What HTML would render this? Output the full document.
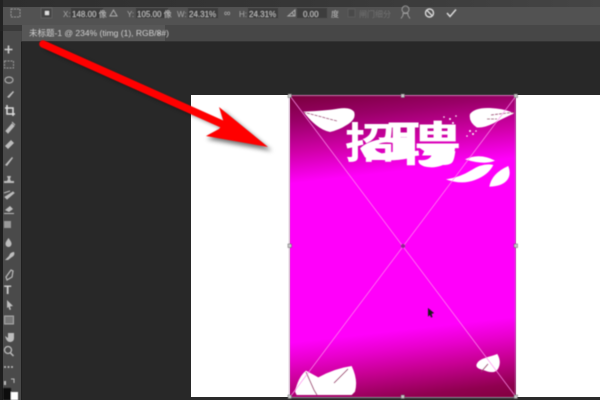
<!DOCTYPE html>
<html><head><meta charset="utf-8">
<style>
html,body{margin:0;padding:0;width:600px;height:400px;overflow:hidden;background:#282828}
svg{position:absolute;left:0;top:0}
text{font-family:"Liberation Sans","Noto Sans CJK SC",sans-serif}
</style></head>
<body>
<svg width="600" height="400" viewBox="0 0 600 400" xmlns="http://www.w3.org/2000/svg">
<defs>
<linearGradient id="g" gradientUnits="userSpaceOnUse" x1="383.600" y1="77.200" x2="422.400" y2="414.800">
<stop offset="0" stop-color="#780038"/>
<stop offset=".03" stop-color="#7c0040"/>
<stop offset=".1" stop-color="#9a0068"/>
<stop offset=".19" stop-color="#d000a8"/>
<stop offset=".28" stop-color="#ff00fa"/>
<stop offset=".745" stop-color="#ff00fa"/>
<stop offset=".8" stop-color="#e800cc"/>
<stop offset=".86" stop-color="#c80094"/>
<stop offset=".94" stop-color="#900050"/>
<stop offset="1" stop-color="#7a0035"/>
</linearGradient>
<linearGradient id="top" x1="0" y1="0" x2="1" y2="0">
<stop offset="0" stop-color="#2e2e2e"/><stop offset=".5" stop-color="#363636"/><stop offset="1" stop-color="#454545"/>
</linearGradient>
<filter id="b2" x="-5%" y="-5%" width="110%" height="110%"><feGaussianBlur stdDeviation=".55"/></filter>
<filter id="sh" x="-20%" y="-20%" width="140%" height="140%"><feGaussianBlur stdDeviation="2.500"/></filter>
</defs>

<!-- workspace -->
<rect width="600" height="400" fill="#282828"/>

<!-- options bar -->
<rect x="0" y="0" width="600" height="7" fill="url(#top)"/>
<rect x="0" y="7" width="600" height="18" fill="#525252"/>
<rect x="0" y="25" width="600" height="16" fill="#474747"/>
<rect x="0" y="41" width="600" height="1" fill="#333"/>
<rect x="0" y="25" width="22" height="6" fill="#3a3a3a"/>
<rect x="0" y="31" width="3" height="369" fill="#1e1e1e"/>
<rect x="0" y="0" width="3" height="31" fill="#222"/>
<rect x="22" y="25" width="143" height="16" fill="#575757"/>

<g filter="url(#b2)">
<rect x="11" y="9" width="9" height="8" fill="none" stroke="#9a9a9a" stroke-width="1" stroke-dasharray="2 1"/>
<rect x="41" y="8" width="11" height="10" fill="#444" stroke="#5e5e5e"/>
<rect x="45" y="11" width="4" height="4" fill="#ddd"/>
<text x="63" y="17" font-size="8" fill="#a8a8a8">X:</text>
<rect x="71" y="8" width="32" height="10" fill="#3d3d3d"/>
<text x="72" y="17" font-size="8" fill="#c0c0c0">148.00 像</text>
<path d="M110 16l3.500-6 3.500 6z" fill="none" stroke="#aaa"/>
<text x="127" y="17" font-size="8" fill="#a8a8a8">Y:</text>
<rect x="136" y="8" width="32" height="10" fill="#3d3d3d"/>
<text x="137" y="17" font-size="8" fill="#c0c0c0">105.00 像</text>
<text x="177" y="17" font-size="8" fill="#a8a8a8">W:</text>
<rect x="188" y="8" width="30" height="10" fill="#3d3d3d"/>
<text x="189" y="17" font-size="8" fill="#c0c0c0">24.31%</text>
<text x="224" y="16" font-size="9" fill="#bbb">∞</text>
<text x="239" y="17" font-size="8" fill="#a8a8a8">H:</text>
<rect x="248" y="8" width="30" height="10" fill="#3d3d3d"/>
<text x="249" y="17" font-size="8" fill="#c0c0c0">24.31%</text>
<path d="M288 16l7-6v6zM292 12l2 4" fill="none" stroke="#aaa"/>
<rect x="297" y="8" width="30" height="10" fill="#3d3d3d"/>
<text x="303" y="17" font-size="8" fill="#c0c0c0">0.00</text>
<text x="331" y="17" font-size="8" fill="#c0c0c0">度</text>
<rect x="348" y="9" width="7" height="8" fill="#4a4a4a" stroke="#5c5c5c"/>
<text x="359" y="17" font-size="8" fill="#717171">闸门细分</text>
<circle cx="405.500" cy="9.500" r="3.500" fill="none" stroke="#999"/>
<path d="M401 18.500l2-3v-2h5v2l2 3" fill="none" stroke="#999"/>
<circle cx="429.500" cy="13" r="4" fill="none" stroke="#d8d8d8" stroke-width="1.400"/>
<path d="M426.800 10.300l5.400 5.400" stroke="#d8d8d8" stroke-width="1.400"/>
<path d="M447 13l3 3.500 6-7" fill="none" stroke="#d8d8d8" stroke-width="1.500"/>
<text x="29" y="36" font-size="8.500" fill="#cfcfcf">未标题-1 @ 234% (timg (1), RGB/8#)</text>
<text x="157" y="36" font-size="8" fill="#bbb">×</text>
</g>

<!-- left tool panel -->
<rect x="3" y="31" width="18" height="369" fill="#4a4a4a"/>
<rect x="21" y="42" width="1" height="358" fill="#1f1f1f"/>
<g filter="url(#b2)" fill="#bdbdbd" stroke="none">
<path d="M4.500 49.500h8M8.500 45.500v8" stroke="#ccc" stroke-width="1.600"/>
<rect x="4.500" y="61" width="9" height="7" fill="none" stroke="#999" stroke-dasharray="2 1"/>
<ellipse cx="9" cy="80" rx="4" ry="3" fill="none" stroke="#aaa" stroke-width="1.200"/>
<path d="M5 90l2 1M7 97l6-6 1 1-5 6z"/>
<path d="M5 108h8v8M7 105v9h8" fill="none" stroke="#ddd" stroke-width="1.500"/>
<path d="M6 131l6-7 2 2-6 7zM12 122l3 3" stroke="#bbb"/>
<path d="M5 146l6-6 3 3-6 6z"/>
<path d="M5 165l7-8 1 1-6 8z"/>
<path d="M4 183h10v-2h-3l-1-2 1-3h-4l1 3-1 2h-3z"/>
<path d="M5 197l8-5 1 1-7 6zM4 193l6-2" stroke="#bbb"/>
<path d="M5 210l5-4 3 3-4 3zM4 213h10v1H4z"/>
<rect x="4" y="221" width="7" height="7" fill="#999"/>
<path d="M8.500 238c2 3 3 4 3 6a3 3 0 0 1-6 0c0-2 1-3 3-6z"/>
<path d="M5 260l4-4c1-3 3-4 5-4 1 2 0 4-2 5l-4 3z"/>
<path d="M6 277l5-7 2 1-1 6-5 3z" fill="none" stroke="#bbb" stroke-width="1.200"/>
<text x="4" y="294" font-size="12" font-weight="bold" font-family="Liberation Serif" fill="#d0d0d0">T</text>
<path d="M7 300l6 6-3 .5 1 3-1.500.5-1-3-1.500 1z"/>
<rect x="4.500" y="316" width="9" height="8" fill="#777" stroke="#aaa"/>
<path d="M5 336l3 2v-5h6v5c0 3-2 4-4 4-3 0-4-3-5-6z"/>
<circle cx="8" cy="350" r="3.500" fill="none" stroke="#bbb" stroke-width="1.300"/>
<path d="M10.500 353l3 3" stroke="#bbb" stroke-width="1.500"/>
<circle cx="5" cy="367" r="1"/><circle cx="8.500" cy="367" r="1"/><circle cx="12" cy="367" r="1"/>
<rect x="4" y="381" width="2" height="4"/>
<path d="M11 379h3v4" fill="none" stroke="#bbb"/>
<rect x="11" y="392" width="7" height="8" fill="#fff"/>
<rect x="3" y="388" width="8" height="12" fill="#0c0c0c"/>
</g>

<!-- canvas -->
<rect x="191" y="95" width="409" height="302" fill="#fff"/>
<rect x="290" y="95" width="226" height="302" fill="url(#g)"/>
<rect x="191" y="397" width="409" height="3" fill="#2a2a2a"/>

<!-- artwork -->
<g filter="url(#b2)">
<g transform="translate(280 90) scale(.33333)" fill="#fff">
<path d="M70 65Q140 62 175 56T222 65Q230 85 205 102T150 126Q110 118 70 65z"/>
<path d="M570 72Q585 52 630 54T702 70Q670 85 640 100T590 112Q565 95 570 72z"/>
<path d="M555 208Q600 188 645 212Q615 226 555 208z"/>
<path d="M498 268Q540 262 575 240T640 225Q625 255 585 270T498 268z"/>
<path d="M628 290Q635 250 685 228Q695 255 680 272T628 290z"/>
<path d="M590 822Q595 810 618 803T652 792Q665 815 655 835T610 840Q585 835 590 822z"/>
<path d="M45 905Q55 860 78 842L115 862Q165 835 215 828 235 870 225 905L215 915H50z"/>
<path fill-rule="evenodd" d="M240 175Q275 140 385 142L385 205Q320 218 255 202zM290 165Q275 180 305 190L345 185V160Q310 152 290 165z"/>
<path d="M415 170L525 165C528 205 495 232 455 232 430 232 412 222 416 210 430 212 450 210 455 195 440 188 425 180 415 170z"/>
</g>
<path d="M303 112l34 9M491 115l24-3M487 119l10 0" stroke="#a02a70" stroke-width=".9" fill="none" stroke-dasharray="3 1"/>
<text x="345" y="158" font-size="42" font-weight="bold" fill="#fff" textLength="50" lengthAdjust="spacingAndGlyphs" font-family="Noto Sans CJK SC">招</text>
<text x="386" y="161" font-size="47" font-weight="bold" fill="#fff" textLength="75" lengthAdjust="spacingAndGlyphs" font-family="Noto Sans CJK SC">聘</text>
<g fill="#fff">
<circle cx="444" cy="117" r=".8"/><circle cx="450" cy="119" r="1"/><circle cx="456" cy="116" r=".8"/><circle cx="453" cy="123" r="1"/>
<circle cx="470" cy="131" r="1"/><circle cx="473" cy="134" r="1"/><circle cx="467" cy="136" r=".8"/><circle cx="476" cy="131" r=".8"/>
</g>
<path d="M306 372l8 18 3 5M334 383l14-14M481 372l7-8" stroke="#a03070" stroke-width="1" fill="none"/>
</g>

<!-- transform box -->
<g filter="url(#b2)">
<rect x="289.500" y="95.500" width="226" height="302" fill="none" stroke="#b98bb0" stroke-width=".9"/>
<path d="M290 96L516 397M516 96L290 397" stroke="#ff90ee" stroke-width=".7" fill="none"/>
<g fill="#c9c9c9" stroke="#555" stroke-width=".5">
<rect x="288" y="94" width="3.500" height="3.500"/><rect x="401" y="94" width="3.500" height="3.500"/><rect x="514" y="94" width="3.500" height="3.500"/>
<rect x="288" y="244" width="3.500" height="3.500"/><rect x="514" y="244" width="3.500" height="3.500"/>
<rect x="288" y="395" width="3.500" height="3.500"/><rect x="401" y="395" width="3.500" height="3.500"/><rect x="514" y="395" width="3.500" height="3.500"/>
<circle cx="403" cy="246" r="1.800" fill="#a010a0"/>
</g>
<path d="M428 308l6 5-2.500 1 1 3-1.500.5-1-2.500-2 1.500z" fill="#1a1a1a"/>
</g>

<!-- red arrow -->
<path d="M45 49L222 128 218 133 207 139 272 151 222 110 226 126 47 43z" fill="#000" opacity=".55" filter="url(#sh)"/>
<g filter="url(#b2)">
<path d="M43 44L222 124" stroke="#ff0000" stroke-width="7.500" stroke-linecap="round" fill="none"/>
<path d="M219 107L268 147 206 136 219 129 224 123z" fill="#ff0000"/>
</g>
</svg>
</body></html>
